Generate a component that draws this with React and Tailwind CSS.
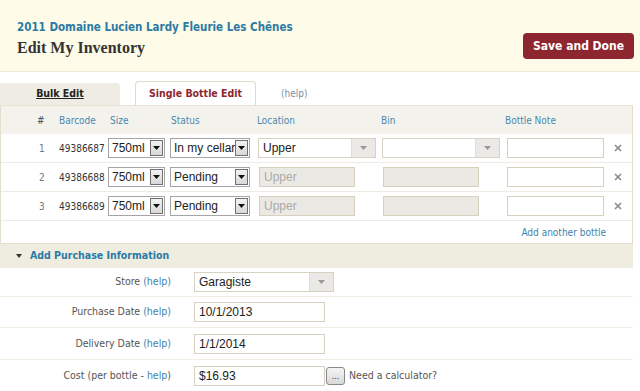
import React from "react";

const F = { fontFamily: '"DejaVu Sans Condensed", "DejaVu Sans", sans-serif' };
const A = { fontFamily: '"Liberation Sans", Arial, sans-serif' };

function SysSelect({ w, value }) {
  return (
    <div className={`flex items-center justify-between h-[20px] border border-[#a5a5a5] bg-white pl-[3px] pr-[1px] ${w}`}>
      <span className="text-[12px] text-[#222] leading-none whitespace-nowrap" style={A}>{value}</span>
      <span className="shrink-0 flex items-center justify-center w-[13px] h-[16px] border border-[#707070] bg-gradient-to-b from-[#f2f2f2] to-[#d8d8d8]">
        <svg width="7" height="4" viewBox="0 0 7 4"><path d="M0 0h7L3.5 4z" fill="#111" /></svg>
      </span>
    </div>
  );
}

function ChosenSelect({ w, value }) {
  return (
    <div className={`flex items-stretch h-[20px] border border-[#d8d2c3] bg-white ${w}`}>
      <span className="flex-1 flex items-center pl-[4px] text-[12px] text-[#222]" style={A}>{value}</span>
      <span className="w-[24px] flex items-center justify-center bg-[#ebe9e5] border-l border-[#e2ded5]">
        <svg width="7" height="4" viewBox="0 0 7 4"><path d="M0 0h7L3.5 4z" fill="#999" /></svg>
      </span>
    </div>
  );
}

function Disabled({ w, value }) {
  return (
    <div className={`flex items-center h-[20px] border border-[#d8d0bf] bg-[#ebe9e3] pl-[4px] text-[12px] text-[#aaa] ${w}`} style={A}>
      {value}
    </div>
  );
}

function TextInput({ w, value }) {
  return (
    <div className={`flex items-center h-[20px] border border-[#d8d0bf] bg-white pl-[4px] text-[12px] text-[#222] ${w}`} style={A}>
      {value}
    </div>
  );
}

function XMark() {
  return (
    <svg width="8" height="8" viewBox="0 0 8 8" className="ml-[10px]">
      <path d="M1 1L7 7M7 1L1 7" stroke="#8a8a8a" strokeWidth="1.6" />
    </svg>
  );
}

function Row({ n, code, status, first, border }) {
  return (
    <div className={`flex items-center h-[29px] ${border ? "border-b border-[#eeebe2]" : ""}`}>
      <span className="w-[58px] pl-[38px] text-[10px] text-[#777]">{n}</span>
      <span className="w-[49px] text-[10px] text-[#333]">{code}</span>
      <SysSelect w="w-[57px]" value="750ml" />
      <span className="w-[5px]" />
      <SysSelect w="w-[80px]" value={status} />
      <span className={first ? "w-[8px]" : "w-[9px]"} />
      {first ? (
        <>
          <ChosenSelect w="w-[118px]" value="Upper" />
          <span className="w-[6px]" />
          <ChosenSelect w="w-[118px]" value="" />
          <span className="w-[7px]" />
        </>
      ) : (
        <>
          <Disabled w="w-[96px]" value="Upper" />
          <span className="w-[28px]" />
          <Disabled w="w-[96px]" value="" />
          <span className="w-[28px]" />
        </>
      )}
      <TextInput w="w-[97px]" value="" />
      <XMark />
    </div>
  );
}

function FormRow({ label, children, h, border }) {
  return (
    <div className={`flex items-center ${h} ${border ? "border-b border-[#f0ede4]" : ""}`}>
      <div className="w-[171px] text-right text-[10.5px] text-[#555]">
        {label}
      </div>
      <div className="w-[23px]" />
      {children}
    </div>
  );
}

export default function App() {
  return (
    <div className="w-[640px] h-[391px] overflow-hidden bg-white" style={F}>
      {/* Header */}
      <div className="h-[72px] bg-[#fefbe8] border-b border-[#ebe8da] flex justify-between pl-[17px] pr-[6px]">
        <div className="pt-[19px]">
          <div className="text-[11.5px] font-bold text-[#2b7aa5] leading-[16px]">2011 Domaine Lucien Lardy Fleurie Les Chênes</div>
          <div className="mt-[3px] text-[16px] font-bold text-[#333] leading-[20px]" style={{ fontFamily: '"Liberation Serif", "DejaVu Serif", serif' }}>Edit My Inventory</div>
        </div>
        <div className="pt-[33px]">
          <div className="w-[111px] h-[26px] rounded-[4px] bg-[#8e2630] flex items-center justify-center text-white text-[12px] font-bold">Save and Done</div>
        </div>
      </div>

      {/* Tabs */}
      <div className="flex items-end h-[33px]">
        <div className="w-[120px] h-[22px] bg-[#efece3] rounded-tr-[4px] flex items-center justify-center text-[10.5px] font-bold text-[#222] underline">Bulk Edit</div>
        <div className="w-[15px]" />
        <div className="w-[121px] h-[24px] bg-white border border-b-0 border-[#e1dcc9] rounded-t-[4px] flex items-center justify-center text-[10.5px] font-bold text-[#8e2630]">Single Bottle Edit</div>
        <div className="h-[24px] flex items-center pl-[25px] text-[10px] text-[#7a8fa6]">(help)</div>
      </div>

      {/* Table panel */}
      <div className="w-[633px] border border-[#e3decd] border-t-[#e8e4d6]">
        <div className="flex items-center h-[28px] bg-[#f4f2ed] text-[10px] text-[#4a88ad]">
          <span className="w-[58px] pl-[36px] text-[#555]">#</span>
          <span className="w-[51px]">Barcode</span>
          <span className="w-[61px]">Size</span>
          <span className="w-[86px]">Status</span>
          <span className="w-[124px]">Location</span>
          <span className="w-[124px]">Bin</span>
          <span>Bottle Note</span>
        </div>
        <div className="bg-white">
          <Row n="1" code="49386687" status="In my cellar" first border />
          <Row n="2" code="49386688" status="Pending" border />
          <Row n="3" code="49386689" status="Pending" border />
          <div className="h-[22px] flex items-center justify-end pr-[26px] text-[10px] text-[#3d83ad]">Add another bottle</div>
        </div>
      </div>

      {/* Section header */}
      <div className="w-[633px] h-[24px] bg-[#efece0] flex items-center pl-[16px]">
        <svg width="6" height="4" viewBox="0 0 6 4"><path d="M0 0h6L3 4z" fill="#333" /></svg>
        <span className="ml-[8px] text-[10.5px] font-bold text-[#2b7aa5]">Add Purchase Information</span>
      </div>

      <div className="w-[633px]">
        <FormRow label={<>Store <span className="text-[#3d83ad]">(help)</span></>} h="h-[29px]" border>
          <ChosenSelect w="w-[140px]" value="Garagiste" />
        </FormRow>
        <FormRow label={<>Purchase Date <span className="text-[#3d83ad]">(help)</span></>} h="h-[31px]" border>
          <TextInput w="w-[131px]" value="10/1/2013" />
        </FormRow>
        <FormRow label={<>Delivery Date <span className="text-[#3d83ad]">(help)</span></>} h="h-[32px]" border>
          <TextInput w="w-[131px]" value="1/1/2014" />
        </FormRow>
        <FormRow label={<>Cost (per bottle - <span className="text-[#3d83ad]">help</span>)</>} h="h-[31px]">
          <TextInput w="w-[131px]" value="$16.93" />
          <div className="ml-[1px] w-[19px] h-[18px] border border-[#888] rounded-[3px] bg-gradient-to-b from-[#f4f4f4] to-[#d9d9d9] flex items-end justify-center pb-[3px] text-[9px] leading-none text-[#333]">...</div>
          <span className="ml-[4px] text-[10.5px] text-[#555]">Need a calculator?</span>
        </FormRow>
      </div>
    </div>
  );
}
